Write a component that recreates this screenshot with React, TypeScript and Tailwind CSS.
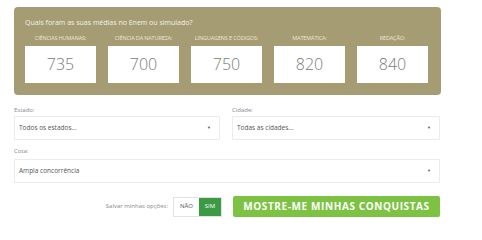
import { useState } from "react";

const notas = [
  { label: "CIÊNCIAS HUMANAS:", value: "735" },
  { label: "CIÊNCIA DA NATUREZA:", value: "700" },
  { label: "LINGUAGENS E CÓDIGOS:", value: "750" },
  { label: "MATEMÁTICA:", value: "820" },
  { label: "REDAÇÃO:", value: "840" },
];

function Select({ text }: { text: string }) {
  return (
    <div className="h-[24px] border border-[#ececec] bg-white flex items-center justify-between pl-[4px] pr-[8px] text-[6.5px] text-[#555]">
      <span>{text}</span>
      <span className="text-[4px] text-[#555]">▼</span>
    </div>
  );
}

export default function App() {
  const [salvar, setSalvar] = useState(true);

  return (
    <div className="bg-white w-[482px] h-[240px] pl-[14px] pt-[7px] font-['Open_Sans',sans-serif]">
      <div className="w-[427px] h-[88px] rounded-[4px] bg-[#a59c74] pl-[11px] pr-[12px] pt-[12px]">
        <p className="text-[7px] text-[#f4f1e6] leading-none">Quais foram as suas médias no Enem ou simulado?</p>
        <div className="flex gap-[12px] mt-[10px]">
          {notas.map((n) => (
            <div key={n.label} className="w-[71px] flex flex-col items-center">
              <span className="text-[5.5px] text-[#ece7d4] leading-none tracking-tight">{n.label}</span>
              <div className="mt-[4px] w-full h-[37px] bg-white flex items-center justify-center text-[16px] font-light text-[#7a7a7a]">
                {n.value}
              </div>
            </div>
          ))}
        </div>
      </div>

      <div className="w-[426px] mt-[12px] flex gap-[12px]">
        <div className="w-[206px]">
          <p className="text-[6px] text-[#888] leading-none mb-[3px]">Estado:</p>
          <Select text="Todos os estados..." />
        </div>
        <div className="w-[208px]">
          <p className="text-[6px] text-[#888] leading-none mb-[3px]">Cidade:</p>
          <Select text="Todas as cidades..." />
        </div>
      </div>

      <div className="w-[426px] mt-[8px]">
        <p className="text-[6px] text-[#888] leading-none mb-[5px]">Cota:</p>
        <Select text="Ampla concorrência" />
      </div>

      <div className="w-[426px] mt-[13px] flex items-center justify-end gap-[11px]">
        <div className="flex items-center gap-[5px]">
          <span className="text-[6px] text-[#888]">Salvar minhas opções:</span>
          <div className="flex h-[20px] border border-[#e2e2e2] text-[6px]">
            <button
              onClick={() => setSalvar(false)}
              className={salvar ? "w-[25px] bg-white text-[#555]" : "w-[25px] bg-[#3d9a44] text-white"}
            >
              NÃO
            </button>
            <button
              onClick={() => setSalvar(true)}
              className={salvar ? "w-[22px] bg-[#3d9a44] text-white" : "w-[22px] bg-white text-[#555]"}
            >
              SIM
            </button>
          </div>
        </div>
        <button className="w-[207px] h-[21px] rounded-[2px] bg-[#7dc242] text-white font-bold text-[10px] tracking-[0.6px]">
          MOSTRE-ME MINHAS CONQUISTAS
        </button>
      </div>
    </div>
  );
}
